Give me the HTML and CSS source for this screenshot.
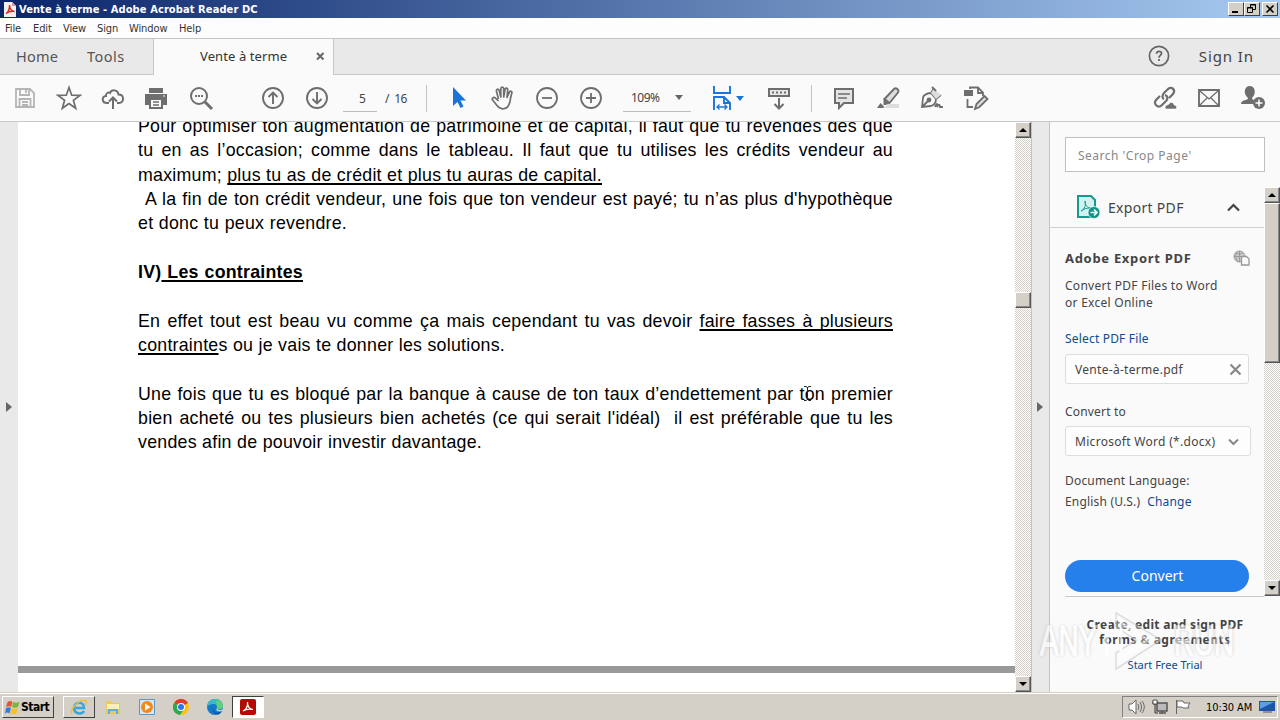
FILE: index.html
```
<!DOCTYPE html>
<html lang="fr">
<head>
    <meta charset="UTF-8">
    <meta name="viewport" content="width=device-width, initial-scale=1.0">
    <title>Vente à terme - Adobe Acrobat Reader DC</title>
    <link rel="stylesheet" href="styles.css">
</head>
<body>

    <!-- Title bar -->
    <div class="title-bar">
        <svg class="app-icon" width="12" height="15" viewBox="0 0 12 15"><path d="M0 0h8l4 4v11H0z" fill="#f4f0f0"/><path d="M8 0v4h4z" fill="#d99"/><path d="M2 11.500c2-1 4-5 3.500-8.500 0 3 2 6 5 6.500-3-.5-6 0-8.500 2z" fill="none" stroke="#d52b1e" stroke-width="1.500"/></svg>
        <span class="window-title">Vente à terme - Adobe Acrobat Reader DC</span>
        <div class="window-buttons">
            <span class="win-btn"><svg width="14" height="12" viewBox="0 0 14 12"><path d="M3 9h6" stroke="#000" stroke-width="2"/></svg></span>
            <span class="win-btn"><svg width="14" height="12" viewBox="0 0 14 12"><path d="M5.500 4V1.500h5v5H8M5 2h6M2.500 4.500h5v5h-5zM2 5h6" fill="none" stroke="#000"/></svg></span>
            <span class="win-btn close"><svg width="14" height="12" viewBox="0 0 14 12"><path d="M3.500 2.500l7 7M10.500 2.500l-7 7" stroke="#000" stroke-width="1.600"/></svg></span>
        </div>
    </div>

    <!-- Menu -->
    <div class="menu-bar">
        <span class="m-file">File</span><span class="m-edit">Edit</span><span class="m-view">View</span><span class="m-sign">Sign</span><span class="m-window">Window</span><span>Help</span>
    </div>

    <!-- Tabs -->
    <div class="tabs">
        <div class="tab-home"><span class="home">Home</span><span class="tools">Tools</span></div>
        <div class="tab-doc">
            <span>Vente à terme</span>
            <svg width="9" height="9" viewBox="0 0 9 9"><path d="M1 1l6.500 6.500M7.500 1L1 7.500" stroke="#666" stroke-width="2"/></svg>
        </div>
        <div class="tab-rest">
            <svg width="22" height="22" viewBox="0 0 22 22"><circle cx="11" cy="11" r="9.600" fill="none" stroke="#666" stroke-width="1.700"/><path d="M8.500 8.800c0-3.300 5-3.200 5-.4 0 2-2.500 2-2.500 4.300M11 14v2" fill="none" stroke="#666" stroke-width="1.800"/></svg>
            <span class="sign-in">Sign In</span>
        </div>
    </div>

    <!-- Toolbar -->
    <div class="toolbar">
        <span class="tool"><svg width="24" height="24" viewBox="0 0 24 24" fill="none" stroke="#b5b5b5" stroke-width="1.800"><path d="M3 3h14l4 4v14H3zM7 3v6h9V3M13 4v3M6.500 21v-8h11v8M9 16h6M9 19h6"/></svg></span>
        <span class="tool"><svg width="26" height="26" viewBox="0 0 26 26" fill="none" stroke="#6e6e6e" stroke-width="1.700"><path d="M13 2.500l2.700 7.700 8.200.2-6.500 4.900 2.300 8L13 18.600l-6.700 4.700 2.300-8-6.500-4.900 8.200-.2z"/></svg></span>
        <span class="tool"><svg width="24" height="24" viewBox="0 0 24 24" fill="none" stroke="#6e6e6e" stroke-width="2"><path d="M8 17H6C.5 17 .5 10.500 5 10 4.500 7 7.500 6 9 7c1.500-4 8-3.500 8.500 1.500 6 0 6 8.500.5 8.500h-2M12 23V12M8 15.500l4-4 4 4"/></svg></span>
        <span class="tool printer"><svg width="24" height="24" viewBox="0 0 24 24" fill="#6e6e6e"><path d="M5 2h14v5H5zM1 8h22v11h-4v-5H5v5H1z"/><path d="M6 13h12v9H6z" fill="#fafafa" stroke="#6e6e6e" stroke-width="2"/><path d="M9 16h6M9 19h6" stroke="#6e6e6e" stroke-width="1.300"/><path d="M19 10h2" stroke="#fff"/></svg></span>
        <span class="tool"><svg width="26" height="26" viewBox="0 0 26 26" fill="none" stroke="#6e6e6e" stroke-width="2"><circle cx="11" cy="11" r="8"/><path d="M17 17l7 7" stroke-width="3"/><path d="M7 11h8" stroke-dasharray="2 1"/></svg></span>

        <span class="tool page-up"><svg width="24" height="24" viewBox="0 0 24 24" fill="none" stroke="#6e6e6e" stroke-width="1.900"><circle cx="12" cy="12" r="10"/><path d="M12 18V7M7.500 11L12 6.500l4.500 4.500"/></svg></span>
        <span class="tool"><svg width="24" height="24" viewBox="0 0 24 24" fill="none" stroke="#6e6e6e" stroke-width="1.900"><circle cx="12" cy="12" r="10"/><path d="M12 6v11M7.500 13l4.500 4.500 4.500-4.500"/></svg></span>
        <span class="page-input">5</span>
        <span class="page-total">/&nbsp; 16</span>
        <span class="divider"></span>

        <span class="tool select-tool"><svg width="16" height="22" viewBox="0 0 16 22"><path d="M2 0v19l4.500-4 3 6 3-1.500-3-6H15z" fill="#1b74d8"/></svg></span>
        <span class="tool"><svg width="26" height="26" viewBox="0 0 26 26" fill="none" stroke="#6e6e6e" stroke-width="1.700" stroke-linejoin="round"><path d="M8.500 14L6.500 6.500C6 4 8.600 3.300 9.200 5.500l1.600 6.500V3.800c0-2.200 2.900-2.200 2.900 0V12l1.300-7.500c.4-2.100 3-1.700 2.700.5L17 12.500l2.300-5.200c.8-1.900 3.200-1 2.500 1-1.400 4-1.300 6-2 9-1 4-3.500 6.500-7 6.500-5 0-6-4-10-8.500-1.500-1.800.8-3.800 2.700-2.200l3 2.900"/></svg></span>
        <span class="tool"><svg width="24" height="24" viewBox="0 0 24 24" fill="none" stroke="#6e6e6e" stroke-width="1.800"><circle cx="12" cy="12" r="10"/><path d="M7 12h10"/></svg></span>
        <span class="tool"><svg width="24" height="24" viewBox="0 0 24 24" fill="none" stroke="#6e6e6e" stroke-width="1.800"><circle cx="12" cy="12" r="10"/><path d="M7 12h10M12 7v10"/></svg></span>
        <span class="zoom-input"><span>109%</span><i class="caret"></i></span>
        <span class="tool fit-tool"><svg width="20" height="26" viewBox="0 0 20 26" fill="none" stroke="#1b74d8" stroke-width="1.900"><path d="M2 1v7h16V1M2 25V12h10l6 6v7M12 12v6h6"/><path d="M5 22h10M7.500 19.500L5 22l2.500 2.500M12.500 19.500L15 22l-2.500 2.500" stroke-width="1.300"/></svg><i class="caret blue"></i></span>
        <span class="tool scroll-tool"><svg width="24" height="24" viewBox="0 0 24 24" fill="none" stroke="#6e6e6e" stroke-width="2"><path d="M2 3h20v7H2z" fill="#e8e8e8"/><path d="M5 6.500h14" stroke-dasharray="2 2"/><path d="M12 12v10M7.500 18l4.500 4.500 4.500-4.500"/></svg></span>
        <span class="divider last"></span>

        <span class="tool note-tool"><svg width="22" height="24" viewBox="0 0 22 24" fill="#e4e4e4" stroke="#6e6e6e" stroke-width="2"><path d="M2 3h18v14h-9l-5 5v-5H2z"/><path d="M5 8h12M5 12h9" stroke-width="1.300"/></svg></span>
        <span class="tool"><svg width="24" height="24" viewBox="0 0 24 24"><path d="M12 18h11v4H8z" fill="#ddd"/><path d="M8.500 13L18 3c2-2 5.500.8 4 3.500L13.500 17z" fill="#ddd" stroke="#6e6e6e" stroke-width="1.900"/><path d="M7.500 12.500l6 5-4 1.500-2 0zM4.500 17l4 4-1.500 1H1z" fill="#6e6e6e"/></svg></span>
        <span class="tool"><svg width="24" height="24" viewBox="0 0 24 24" fill="none" stroke="#6e6e6e" stroke-width="1.800"><path d="M2 21L3 12c0-3 5-5 8-5l5 6c0 3-2 6-5 7zM2 21l6-6M11 7l3-5M16 13l5-4"/><path d="M14 2l7 7-5 4-5-6z" fill="#ddd" stroke="none"/><path d="M12 1l4 4M15 21c2-5 3-3 2 0 2-4 3-2 3 0h3"/><circle cx="9" cy="14" r="1.500" fill="#6e6e6e"/></svg></span>
        <span class="tool"><svg width="26" height="26" viewBox="0 0 26 26" fill="none" stroke="#6e6e6e" stroke-width="1.800"><path d="M7 4V2.500h8l5 5V11M15 3v5h5M4.500 14v8H10"/><path d="M1 5h9v6H1z" fill="#6e6e6e" stroke="none"/><path d="M12 24l1.500-5 8-8 3 3-8 8z" fill="#ddd"/></svg></span>

        <div class="share-tools">
            <span class="tool"><svg width="26" height="26" viewBox="0 0 26 26" fill="none" stroke="#6e6e6e" stroke-width="2.200"><path d="M12 14c-2-1-2-4 0-6l4-4c4-3 8 1 5 5l-4 4M13 10c3 1 3 4 1 6l-4 4c-4 4-9-1-6-5l4-4"/><path d="M13 23c0-3 3-3 4-4 2-3 5-1 5 1 3 0 3 3 2 4H14z" fill="#6e6e6e" stroke="#fafafa" stroke-width=".6"/></svg></span>
            <span class="tool"><svg width="24" height="20" viewBox="0 0 24 20" fill="none" stroke="#6e6e6e"><path d="M2 2h20v16H2z" stroke-width="1.900"/><path d="M3 3l9 8 9-8M3 17l7-7M21 17l-7-7" stroke-width="1.300"/></svg></span>
            <span class="tool"><svg width="26" height="26" viewBox="0 0 26 26"><path d="M1 19c0-5 7-3 7-6-5-4-4-12 2-12s6 9 2 12c0 2 3 2 4 3l-3 3z" fill="#6e6e6e"/><circle cx="19" cy="18" r="6" fill="#6e6e6e"/><path d="M15.500 18h7M19 14.500v7" stroke="#fff" stroke-width="1.500"/></svg></span>
        </div>
    </div>

    <div class="workspace">
        <div class="left-strip"><i class="arrow-right"></i></div>

        <!-- PDF page -->
        <div class="document">
            <div class="page">
                <p class="line">Pour optimiser ton augmentation de patrimoine et de capital, il faut que tu revendes dès que</p>
                <p class="line">tu en as l’occasion; comme dans le tableau. Il faut que tu utilises les crédits vendeur au</p>
                <p class="line w-max">maximum; <u>plus tu as de crédit et plus tu auras de capital.</u></p>
                <p class="line indent">A la fin de ton crédit vendeur, une fois que ton vendeur est payé; tu n’as plus d'hypothèque</p>
                <p class="line w-donc">et donc tu peux revendre.</p>
                <p class="line">&nbsp;</p>
                <p class="line heading">IV)<u> Les contraintes</u></p>
                <p class="line">&nbsp;</p>
                <p class="line">En effet tout est beau vu comme ça mais cependant tu vas devoir <u>faire fasses à plusieurs</u></p>
                <p class="line w-contraintes"><u>contrainte</u>s ou je vais te donner les solutions.</p>
                <p class="line">&nbsp;</p>
                <p class="line">Une fois que tu es bloqué par la banque à cause de ton taux d’endettement par ton premier</p>
                <p class="line">bien acheté ou tes plusieurs bien achetés (ce qui serait l'idéal) &nbsp;il est préférable que tu les</p>
                <p class="line w-vendes">vendes afin de pouvoir investir davantage.</p>
            </div>
            <div class="page-gap"></div>
            <svg class="text-cursor" width="9" height="17" viewBox="0 0 9 17"><path d="M1 1.500h2l1.500 1L6 1.500h2M4.500 2v13M1 15.500h2l1.500-1 1.500 1h2" fill="none" stroke="#222"/></svg>
        </div>

        <div class="scrollbar doc-scroll">
            <span class="sb-btn up"></span>
            <span class="sb-thumb"></span>
            <span class="sb-btn down"></span>
        </div>
        <div class="right-strip"><i class="arrow-right"></i></div>

        <!-- Tools panel -->
        <div class="panel">
            <div class="search">Search 'Crop Page'</div>
            <div class="panel-body">
                <div class="panel-content">
                    <div class="export-head">
                        <svg width="24" height="24" viewBox="0 0 24 24"><path d="M2 1h13l4 4v17H2z" fill="#d5f1ef" stroke="#149a91" stroke-width="2"/><path d="M5 16c4-2 5-6 4-10 0 4 2 7 6 7-5 0-7 1-10 3z" fill="none" stroke="#149a91"/><circle cx="18" cy="17.500" r="6" fill="#0d9488" stroke="#fafafa" stroke-width=".7"/><path d="M14.500 17.500h6M18 14.500l3 3-3 3" fill="none" stroke="#fff" stroke-width="1.700"/></svg>
                        <span>Export PDF</span>
                        <svg class="chevron" width="13" height="9" viewBox="0 0 13 9"><path d="M1 7.500l5.500-5.500L12 7.500" fill="none" stroke="#444" stroke-width="2.200"/></svg>
                    </div>
                    <div class="export-body">
                        <div class="export-title">
                            <b>Adobe Export PDF</b>
                            <svg width="17" height="16" viewBox="0 0 17 16"><circle cx="6.500" cy="6.500" r="5.500" fill="#ccc" stroke="#999"/><path d="M1 6.500h11M6.500 1v11M3 2.500c3 2 4 2 7 0M4 1.500C2 5 3 9 5 12" fill="none" stroke="#999"/><path d="M8.500 6.500h5l2.500 2.500v6H8.500z" fill="#fafafa" stroke="#999" stroke-width="1.300"/></svg>
                        </div>
                        <p class="convert-info"><span>Convert PDF Files to Word</span><br><span class="online">or Excel Online</span></p>
                        <a class="link select-file">Select PDF File</a>
                        <div class="file-box"><span>Vente-à-terme.pdf</span><svg width="13" height="13" viewBox="0 0 13 13"><path d="M1.500 1.500l10 10M11.500 1.500l-10 10" stroke="#888" stroke-width="2.200"/></svg></div>
                        <p class="convert-to">Convert to</p>
                        <div class="format-box"><span>Microsoft Word (*.docx)</span><svg width="11" height="8" viewBox="0 0 11 8"><path d="M1 1.500l4.500 4.500L10 1.500" fill="none" stroke="#888" stroke-width="2"/></svg></div>
                        <p class="language">Document Language:</p>
                        <p class="english"><span>English (U.S.)</span><a class="link change">Change</a></p>
                        <button class="convert-btn"><span>Convert</span></button>
                    </div>
                </div>
                <div class="scrollbar panel-scroll">
                    <span class="sb-btn up"></span>
                    <span class="sb-thumb"></span>
                    <span class="sb-btn down"></span>
                </div>
            </div>
            <div class="promo">
                <b class="promo-1">Create, edit and sign PDF</b>
                <b class="promo-2">forms &amp; agreements</b>
                <a class="link trial">Start Free Trial</a>
            </div>
        </div>
    </div>

    <!-- Watermark -->
    <div class="watermark">
        <span>ANY</span>
        <svg width="62" height="64" viewBox="0 0 62 64"><path d="M11 4L56 31 11 60V44l20-13-20-13z" fill="#fff" fill-opacity=".5" stroke="#ccc" stroke-width="1.500"/><path d="M16 14v34l27-17z" fill="none" stroke="#fff" stroke-width="3"/><path d="M2 17v30" stroke="#fff" stroke-width="4"/></svg>
        <span>RUN</span>
    </div>

    <!-- Taskbar -->
    <div class="taskbar">
        <div class="start-btn">
            <svg width="15" height="15" viewBox="0 0 15 15"><path d="M2.500 2c2-1.500 3.500-1 5 0L6 7C4 6 3 6 1 7z" fill="#e4572e"/><path d="M8 2c2 1 4 1 6.500 0L13 7c-2 1-4 1-6 0z" fill="#7db43c"/><path d="M1 8c2-1 3-1 5 0l-1.500 5.500c-2-1.500-3-1.500-4.500 0z" fill="#3a7bd0"/><path d="M7 8c2 1 4 1 6 0l-1.500 5.500c-2 1-4 1-6 0z" fill="#f4c22b"/></svg>
            <b>Start</b>
        </div>
        <div class="task ie"><svg width="18" height="17" viewBox="0 0 18 17" fill="none"><path d="M4 9h10c0-7-9-7-10 0 0 6 8 7 10 3" stroke="#38a5de" stroke-width="2.500"/><path d="M2 15C-1 10 11-1 16 2c1 1 0 3-1 4" stroke="#eebe3a" stroke-width="1.500"/></svg></div>
        <div class="task"><svg width="16" height="16" viewBox="0 0 16 16"><path d="M1 2h5l1 2h8v11H1z" fill="#e8c860"/><path d="M2 5h12v5H2z" fill="#faf0b8"/><path d="M3 15v-5h10v5h-2v-3H5v3z" fill="#5ab0dc"/></svg></div>
        <div class="task"><svg width="16" height="16" viewBox="0 0 16 16"><path d="M.5.500h15v15H.5z" fill="#d2e7f8" stroke="#5d97c8"/><circle cx="8" cy="8" r="6" fill="#f18a1c"/><path d="M6 4.500v7L11.500 8z" fill="#fff"/></svg></div>
        <div class="task"><svg width="16" height="16" viewBox="0 0 16 16"><circle cx="8" cy="8" r="8" fill="#fbc116"/><path d="M8 8L1 4a8 8 0 0 1 14 0z" fill="#e33b2e"/><path d="M8 8L1 4a8 8 0 0 0 6 12l4-6z" fill="#2da94f"/><circle cx="8" cy="8" r="4" fill="#fff"/><circle cx="8" cy="8" r="3" fill="#2d75e8"/></svg></div>
        <div class="task"><svg width="16" height="16" viewBox="0 0 16 16"><circle cx="8" cy="8" r="8" fill="#1378c8"/><path d="M0 8C1-3 16-2 16 7c0 4-6 4-6 2 1-1 0-4-3-4S1 6 0 8z" fill="#35bdc3"/><path d="M9 1c5 0 7 4 7 6 0 4-6 4-6 2" fill="#64cf77"/><path d="M6 9c0 5 5 6 9 3-1 2-2 3-4 3.500C8 15 5 13 6 9z" fill="#0d4f9e"/><path d="M10 9c0 2 3 3 6 1l-1 2c-4 1-7 0-5-3z" fill="#d4d0c8"/></svg></div>
        <div class="task acrobat"><svg width="16" height="16" viewBox="0 0 16 16"><rect width="16" height="16" rx="2" fill="#b30b00"/><path d="M3 12c3-1 5-5 4.500-9 0 4 2 7 5.500 7.500-4-1-7-.5-10 1.500z" fill="none" stroke="#fff" stroke-width="1.200"/></svg></div>

        <div class="tray">
            <svg width="17" height="16" viewBox="0 0 17 16" fill="none" stroke="#666"><path d="M1 5h3l4-4v14l-4-4H1z" fill="#fff"/><path d="M10 5c1 2 1 4 0 6M12 3c2 3 2 7 0 10M14 2c3 4 3 8 0 12"/></svg>
            <svg width="16" height="16" viewBox="0 0 16 16" fill="none" stroke="#555"><path d="M5 4h10v8H5zM7 14h7M10 12v2" fill="#bbb" stroke-width="1.500"/><path d="M1 2v3h4V2M3 5v9h3" stroke="#333"/><path d="M1 1h4v4H1z" fill="#fff"/></svg>
            <svg width="17" height="16" viewBox="0 0 17 16" fill="#fff" stroke="#666"><path d="M1.500 1v14M2 2h6l1 2h6l-2 3 1 2H8L7 8H2z"/></svg>
            <span class="clock">10:30 AM</span>
            <svg width="16" height="14" viewBox="0 0 16 14"><path d="M0 1h16v10H0z" fill="#1d55a8"/><path d="M1 2h14L1 9z" fill="#5e9ee5"/><path d="M4 12h9" stroke="#555"/></svg>
        </div>
    </div>

</body>
</html>
```
FILE: styles.css
```
* {
    margin: 0;
    padding: 0;
    box-sizing: border-box;
}

body {
    width: 1280px;
    height: 720px;
    overflow: hidden;
    font-family: "Noto Sans", "Open Sans", sans-serif;
    color: #444;
    background-color: #fafafa;
    display: flex;
    flex-direction: column;
}

svg {
    display: block;
    flex: none;
}

span, b, a {
    white-space: nowrap;
}

/* Title bar */
.title-bar {
    height: 18px;
    display: flex;
    align-items: center;
    padding: 0 2px 0 4px;
    background: linear-gradient(to right, #0a246a, #a6caf0);
    color: #fff;
}

.window-title {
    font-family: "DejaVu Sans Condensed", "DejaVu Sans", sans-serif;
    font-size: 11px;
    font-weight: bold;
    margin-left: 3px;
    letter-spacing: 0.1px;
}

.window-buttons {
    display: flex;
    margin-left: auto;
}

.win-btn {
    width: 16px;
    height: 14px;
    background-color: #d4d0c8;
    border: 1px solid;
    border-color: #fff #404040 #404040 #fff;
}

.win-btn.close {
    margin-left: 2px;
}

/* Menu */
.menu-bar {
    height: 20px;
    display: flex;
    align-items: center;
    padding-left: 5px;
    font-family: "DejaVu Sans Condensed", sans-serif;
    font-size: 11px;
    letter-spacing: -0.1px;
    color: #333;
    background-color: #fdfdfd;
}

.m-file { width: 28px; }
.m-edit { width: 30px; }
.m-view { width: 34px; }
.m-sign { width: 32px; }
.m-window { width: 50px; }

/* Tabs */
.tabs {
    height: 37px;
    display: flex;
    border-top: 1px solid #c4c4c4;
}

.tab-home {
    width: 154px;
    display: flex;
    align-items: center;
    background-color: #e9e9e9;
    border-right: 1px solid #c8c8c8;
    border-bottom: 1px solid #c8c8c8;
    font-size: 14.5px;
    color: #555;
    padding: 0 0 2px 16px;
}

.home {
    width: 71px;
    letter-spacing: 0.2px;
}

.tools {
    letter-spacing: 0.5px;
}

.tab-doc {
    width: 179px;
    display: flex;
    align-items: center;
    padding: 0 0 2px 46px;
    font-size: 13px;
    color: #333;
}

.tab-doc span {
    width: 116px;
    letter-spacing: 0.1px;
}

.tab-rest {
    flex: 1;
    display: flex;
    align-items: center;
    justify-content: flex-end;
    background-color: #e9e9e9;
    border-left: 1px solid #c8c8c8;
    border-bottom: 1px solid #c8c8c8;
    padding: 0 26px 2px 0;
}

.sign-in {
    margin-left: 29px;
    font-size: 15px;
    letter-spacing: 0.9px;
}

/* Toolbar */
.toolbar {
    height: 47px;
    display: flex;
    align-items: center;
    padding-left: 3px;
    border-bottom: 1px solid #c8c8c8;
    font-family: "Noto Sans", sans-serif;
    font-size: 12px;
}

.tool {
    width: 44px;
    flex: none;
    display: flex;
    align-items: center;
    justify-content: center;
}

.printer {
    padding-right: 2px;
}

.page-up {
    margin-left: 28px;
}

.page-input {
    width: 34px;
    height: 27px;
    line-height: 27px;
    margin-left: 4px;
    padding-left: 16px;
    border-bottom: 1px solid #bbb;
}

.page-total {
    width: 41px;
    margin-left: 8px;
    letter-spacing: -0.5px;
}

.divider {
    width: 1px;
    height: 27px;
    background-color: #c4c4c4;
}

.select-tool {
    margin-left: 10px;
}

.zoom-input {
    width: 68px;
    height: 27px;
    margin-left: 10px;
    display: flex;
    align-items: center;
    justify-content: space-between;
    padding: 0 8px 0 8px;
    border-bottom: 1px solid #bbb;
    letter-spacing: -0.5px;
}

.caret {
    border: 4px solid transparent;
    border-top: 5px solid #666;
    border-bottom: 0;
}

.caret.blue {
    border-top-color: #1b74d8;
    margin-left: 4px;
}

.fit-tool {
    margin-left: 15px;
}

.scroll-tool {
    margin-left: 7px;
}

.divider.last {
    margin-left: 10px;
}

.note-tool {
    margin-left: 10px;
}

.share-tools {
    display: flex;
    margin-left: auto;
    padding-right: 5px;
}

/* Workspace */
.workspace {
    height: 570px;
    display: flex;
}

.left-strip,
.right-strip {
    width: 18px;
    display: flex;
    align-items: center;
    background-color: #e9e9e9;
}

.left-strip {
    padding-left: 6px;
}

.right-strip {
    width: 19px;
    padding-left: 5px;
    border-left: 1px solid #c4c4c4;
    border-right: 1px solid #c4c4c4;
}

.arrow-right {
    border: 5px solid transparent;
    border-left: 6px solid #666;
    border-right: 0;
}

.document {
    position: relative;
    width: 997px;
    overflow: hidden;
    background-color: #fff;
    display: flex;
    flex-direction: column;
}

.page {
    height: 552px;
    flex: none;
    padding-left: 120px;
    margin-top: -8px;
}

.line {
    width: 755px;
    height: 24.35px;
    line-height: 24.35px;
    font-family: "Liberation Sans", Arial, sans-serif;
    font-size: 17.8px;
    letter-spacing: 0.24px;
    color: #000;
    white-space: nowrap;
    text-align-last: justify;
}

.line u {
    text-decoration-thickness: 2px;
    text-underline-offset: 2px;
    text-decoration-skip-ink: none;
}

.line.indent {
    padding-left: 7px;
}

.line.heading {
    width: 165px;
    font-weight: bold;
}

.line.w-max { width: 464px; }
.line.w-donc { width: 209px; }
.line.w-contraintes { width: 367px; }
.line.w-vendes { width: 344px; }

.page-gap {
    height: 7px;
    flex: none;
    background-color: #999;
}

.text-cursor {
    position: absolute;
    left: 785px;
    top: 263px;
}

/* Scrollbars */
.scrollbar {
    width: 16px;
    display: flex;
    flex-direction: column;
    background: repeating-conic-gradient(#d4d0c8 0 25%, #fff 0 50%) 0 0 / 2px 2px;
}

.sb-btn,
.sb-thumb {
    height: 16px;
    flex: none;
    background-color: #d4d0c8;
    border: 1px solid;
    border-color: #fff #555 #555 #fff;
    box-shadow: inset -1px -1px 0 #888;
}

.sb-btn {
    display: flex;
    align-items: center;
    justify-content: center;
}

.sb-btn::before {
    content: "";
    border: 4px solid transparent;
}

.sb-btn.up::before {
    border-top: 0;
    border-bottom-color: #000;
}

.sb-btn.down::before {
    border-bottom: 0;
    border-top-color: #000;
}

.sb-btn.down {
    margin-top: auto;
}

.doc-scroll .sb-thumb {
    margin-top: 154px;
}

.panel-scroll {
    height: 409px;
}

.panel-scroll .sb-thumb {
    height: 160px;
}

/* Tools panel */
.panel {
    width: 230px;
    display: flex;
    flex-direction: column;
    background-color: #fafafa;
}

.search {
    width: 200px;
    height: 35px;
    line-height: 35px;
    margin: 15px 0 0 15px;
    padding-left: 12px;
    border: 1px solid #c0c0c0;
    background-color: #fff;
    font-size: 12px;
    letter-spacing: 0.5px;
    color: #888;
    white-space: nowrap;
}

.panel-body {
    height: 410px;
    margin-top: 15px;
    display: flex;
}

.panel-content {
    width: 214px;
}

.export-head {
    height: 41px;
    display: flex;
    align-items: center;
    padding-left: 26px;
    border-bottom: 1px solid #d0d0d0;
    font-size: 14px;
    letter-spacing: 0.3px;
}

.export-head span {
    width: 111px;
    margin-left: 8px;
}

.chevron {
    margin-left: 8px;
}

.export-body {
    height: 369px;
    margin-left: 15px;
    padding-top: 20px;
    border-bottom: 1px solid #c8c8c8;
    font-size: 12px;
    letter-spacing: 0.18px;
}

.export-title {
    width: 185px;
    height: 20px;
    display: flex;
    justify-content: space-between;
    align-items: center;
}

.export-title b {
    font-size: 13px;
    letter-spacing: 0.7px;
}

.convert-info {
    height: 34px;
    line-height: 17px;
    margin-top: 9px;
    letter-spacing: 0.27px;
}

.link {
    color: #0d4b92;
}

.select-file {
    display: block;
    height: 17px;
    line-height: 17px;
    margin-top: 19px;
}

.file-box,
.format-box {
    width: 184px;
    height: 30px;
    margin-top: 7px;
    display: flex;
    align-items: center;
    justify-content: space-between;
    padding: 0 6px 0 9px;
    border: 1px solid #ddd;
    border-radius: 3px;
    background-color: #fdfdfd;
    letter-spacing: 0.3px;
}

.format-box {
    width: 186px;
    margin-top: 6px;
    padding-top: 1px;
    padding-right: 11px;
}

.convert-to {
    height: 17px;
    line-height: 17px;
    margin-top: 19px;
}

.language {
    height: 17px;
    line-height: 17px;
    margin-top: 16px;
}

.english {
    height: 17px;
    line-height: 17px;
    margin-top: 4px;
}

.change {
    margin-left: 7px;
}

.convert-btn {
    display: block;
    width: 184px;
    height: 32px;
    margin-top: 50px;
    padding: 0 0 2px 1px;
    border: none;
    border-radius: 16px;
    background-color: #2680eb;
    color: #fff;
    font-family: "Noto Sans", sans-serif;
    font-size: 14px;
}

.promo {
    display: flex;
    flex-direction: column;
    align-items: center;
    padding-top: 20px;
    font-size: 12px;
    line-height: 15px;
    letter-spacing: 0.3px;
}

.promo-2 {
    letter-spacing: 0.5px;
}

.trial {
    margin-top: 10px;
    font-size: 11px;
    letter-spacing: 0;
}

/* Watermark */
.watermark {
    position: absolute;
    left: 1040px;
    top: 608px;
    width: 192px;
    height: 66px;
    display: flex;
    align-items: center;
    justify-content: space-between;
    font-family: "Liberation Sans", Arial, sans-serif;
    font-size: 42px;
    color: #fff;
    opacity: 0.6;
}

.watermark span {
    width: 58px;
    transform: scaleX(0.66);
    transform-origin: left;
    -webkit-text-stroke: 1.5px #fff;
    text-shadow: 0 0 4px #888;
}

/* Taskbar */
.taskbar {
    height: 28px;
    display: flex;
    align-items: center;
    padding: 1px 2px 0;
    background-color: #d4d0c8;
    border-top: 1px solid #d4d0c8;
    box-shadow: inset 0 1px 0 #fff;
    font-family: "DejaVu Sans Condensed", sans-serif;
    font-size: 11px;
    color: #000;
}

.start-btn {
    width: 52px;
    height: 22px;
    display: flex;
    align-items: center;
    padding-left: 2px;
    margin-right: 9px;
    border: 1px solid;
    border-color: #fff #404040 #404040 #fff;
}

.start-btn b {
    margin-left: 1px;
    font-size: 12px;
    letter-spacing: -0.5px;
}

.task {
    width: 34px;
    height: 22px;
    display: flex;
    align-items: center;
    justify-content: center;
}

.task.ie {
    width: 32px;
    border: 1px solid;
    border-color: #fff #404040 #404040 #fff;
    margin-right: 1px;
}

.task.acrobat {
    width: 32px;
    background-color: #fff;
    border: 1px solid;
    border-color: #404040 #fff #fff #404040;
}

.tray {
    width: 156px;
    height: 22px;
    margin-left: auto;
    display: flex;
    align-items: center;
    gap: 7px;
    padding-left: 5px;
    border: 1px solid;
    border-color: #808080 #fff #fff #808080;
}

.clock {
    margin-left: 7px;
    width: 46px;
    letter-spacing: -0.1px;
}
```
